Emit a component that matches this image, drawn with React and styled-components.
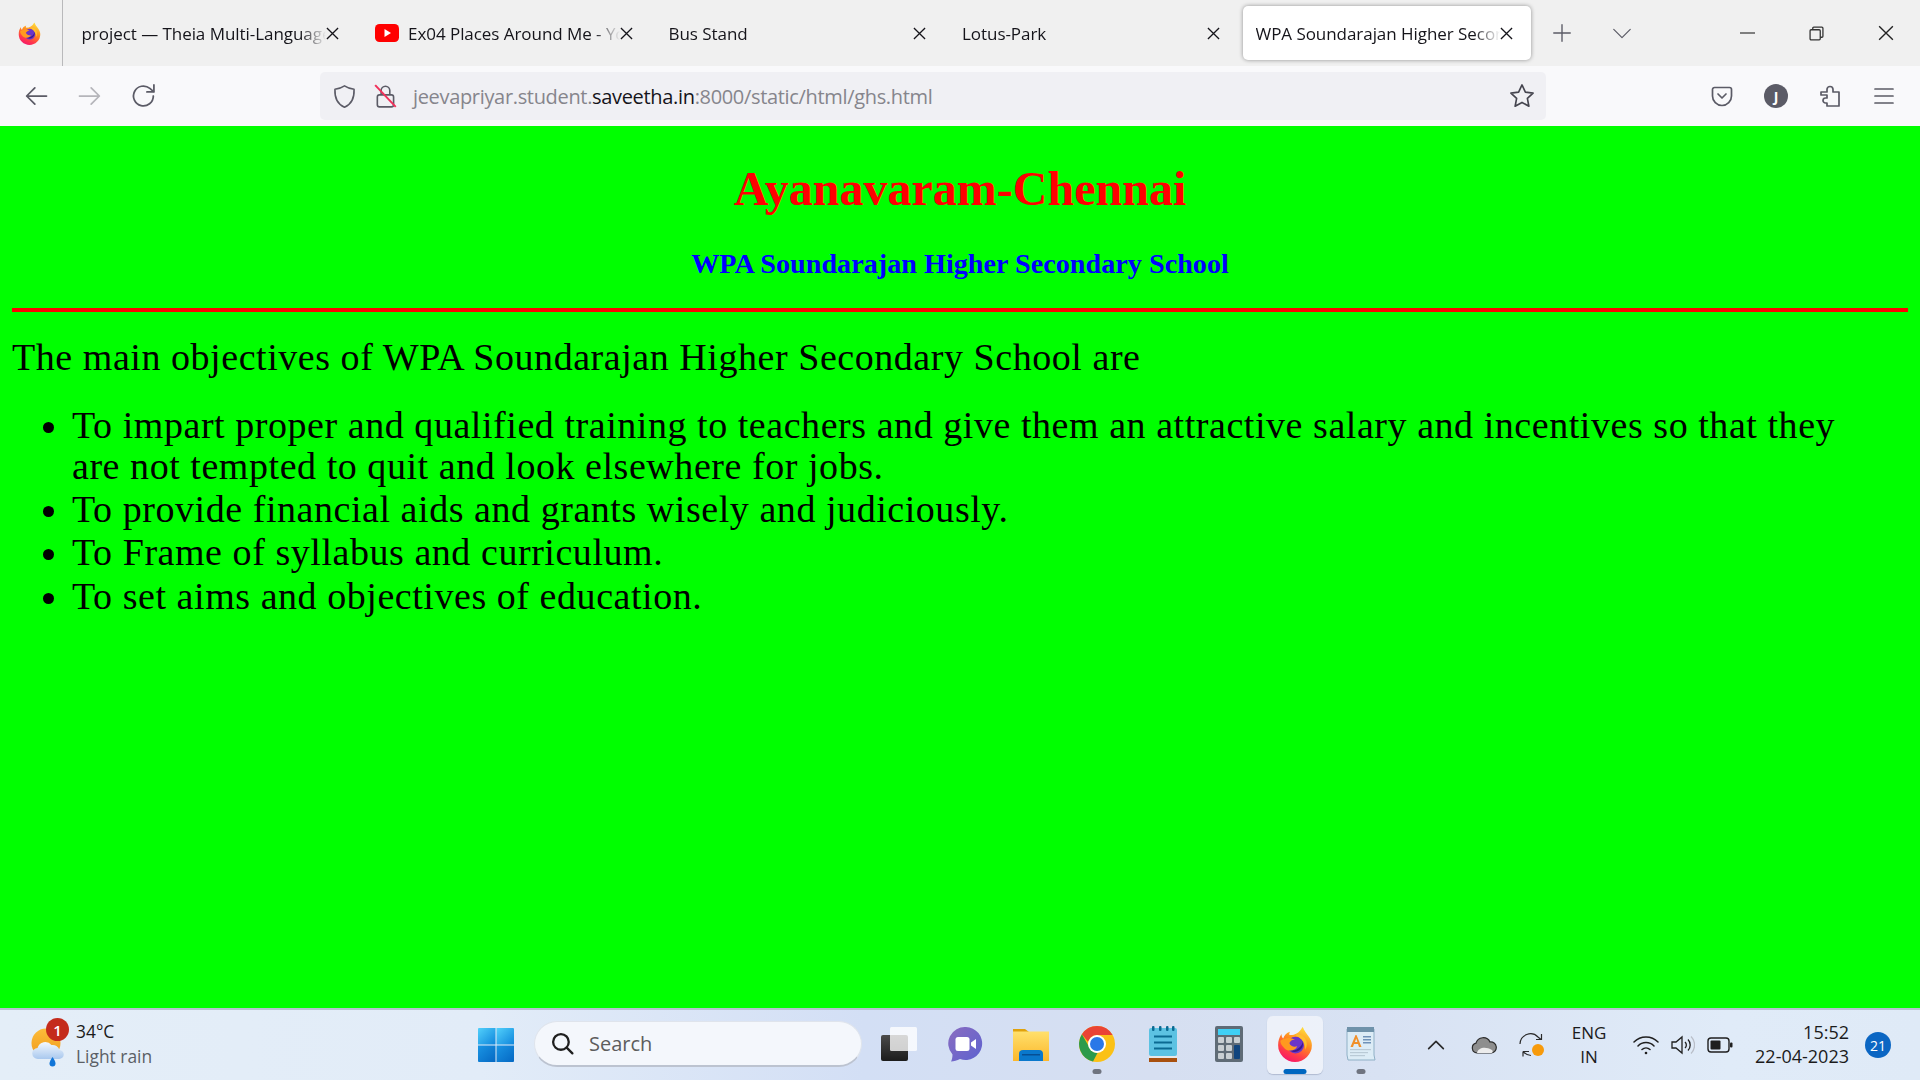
import React from "react";
import styled, { createGlobalStyle } from "styled-components";

const GlobalStyle = createGlobalStyle`
  html, body { margin: 0; padding: 0; overflow: hidden; }
  body { font-family: "Open Sans", "Noto Sans", sans-serif; background: #00ff00; }
`;

const Shell = styled.div`
  width: 1920px;
  height: 1080px;
  display: flex;
  flex-direction: column;
  overflow: hidden;
`;

/* ---------- tab strip ---------- */
const TabStrip = styled.div`
  height: 66px;
  flex: none;
  display: flex;
  align-items: center;
  background: #f0f0f0;
`;
const AppMenu = styled.div`
  width: 63px;
  height: 66px;
  flex: none;
  display: flex;
  align-items: center;
  padding-left: 18px;
  box-sizing: border-box;
  border-right: 1px solid #b9b9bb;
`;
const TabList = styled.div`
  display: flex;
  gap: 5.5px;
  margin-left: 6px;
`;
const Tab = styled.div`
  width: 288px;
  height: 54px;
  box-sizing: border-box;
  display: flex;
  align-items: center;
  padding: 0 18px 0 12.5px;
  border-radius: 5px;
  background: ${p => (p.$active ? "#fff" : "transparent")};
  box-shadow: ${p => (p.$active ? "0 0 4px rgba(0,0,0,.4)" : "none")};
`;
const TabTitle = styled.span`
  flex: 1;
  min-width: 0;
  overflow: hidden;
  white-space: nowrap;
  font-size: 17px;
  letter-spacing: -0.05px;
  color: #15141a;
  margin-left: ${p => (p.$icon ? "9px" : "0")};
  -webkit-mask-image: linear-gradient(to left, transparent 0, #000 26px);
  mask-image: linear-gradient(to left, transparent 0, #000 26px);
`;
const StripActions = styled.div`
  flex: 1;
  display: flex;
  align-items: center;
  padding-left: 20px;
`;
const StripButton = styled.div`
  width: ${p => p.$w}px;
  display: flex;
  justify-content: flex-start;
  align-items: center;
`;
const WindowButtons = styled.div`
  margin-left: auto;
  display: flex;
  align-items: center;
  gap: 54px;
  padding-right: 26px;
`;

/* ---------- toolbar ---------- */
const Toolbar = styled.div`
  height: 60px;
  flex: none;
  display: flex;
  align-items: center;
  background: #f9f9fb;
  padding-left: 22px;
  box-sizing: border-box;
`;
const NavGroup = styled.div`
  width: 298px;
  display: flex;
  align-items: center;
  gap: 26px;
`;
const UrlBar = styled.div`
  width: 1226px;
  height: 48px;
  display: flex;
  align-items: center;
  box-sizing: border-box;
  padding: 0 10px 0 11px;
  border-radius: 5px;
  background: #f0f0f4;
`;
const LockSlot = styled.div`
  display: flex;
  margin-left: 15px;
`;
const UrlText = styled.div`
  flex: 1;
  margin-left: 14px;
  font-size: 20px;
  letter-spacing: -0.33px;
  color: #86858c;
  white-space: nowrap;
`;
const UrlHost = styled.span`
  color: #15141a;
`;
const ToolGroup = styled.div`
  margin-left: auto;
  display: flex;
  align-items: center;
  gap: 30px;
  padding-right: 24px;
`;
const Avatar = styled.div`
  width: 24px;
  height: 24px;
  border-radius: 50%;
  background: #5b5b66;
  color: #fff;
  font-size: 14px;
  font-weight: 700;
  display: flex;
  align-items: center;
  justify-content: center;
`;

/* ---------- page ---------- */
const Page = styled.main`
  flex: 1;
  min-height: 0;
  background: #00ff00;
  padding: 0 12px;
  font-family: "Liberation Serif", serif;
  color: #000;
`;
const Title = styled.h1`
  margin: 0;
  padding-top: 33px;
  font-size: 48px;
  line-height: 60px;
  font-weight: 700;
  text-align: center;
  color: #ff0000;
`;
const SubTitle = styled.h2`
  margin: 0;
  padding-top: 28px;
  font-size: 28.2px;
  line-height: 34px;
  font-weight: 700;
  text-align: center;
  color: #0000ff;
`;
const Rule = styled.hr`
  margin: 27px 0 0;
  height: 4px;
  border: 0;
  background: #ff0000;
`;
const Intro = styled.p`
  margin: 21px 0 0;
  font-size: 38px;
  line-height: 48px;
  letter-spacing: 0.55px;
`;
const Objectives = styled.ul`
  margin: 23.5px 0 0;
  padding: 0 40px 0 60px;
  font-size: 38px;
  line-height: 41px;
  letter-spacing: 0.55px;
`;
const Objective = styled.li`
  margin-bottom: 2.4px;
`;

/* ---------- taskbar ---------- */
const Taskbar = styled.footer`
  height: 72px;
  flex: none;
  box-sizing: border-box;
  border-top: 2px solid #b8c2cf;
  display: flex;
  align-items: center;
  background: linear-gradient(90deg, #e4eef8 0%, #e2ecf8 25%, #d3dff5 45%, #d6dff1 60%, #d8e2f3 72%, #e0ebf8 90%, #dfeaf7 100%);
`;
const Weather = styled.div`
  width: 478px;
  flex: none;
  box-sizing: border-box;
  padding-left: 30px;
  display: flex;
  align-items: center;
  gap: 8px;
`;
const WeatherIcon = styled.div`
  position: relative;
  width: 38px;
  height: 46px;
`;
const AlertBadge = styled.span`
  position: absolute;
  top: -4px;
  left: 16px;
  width: 23px;
  height: 23px;
  border-radius: 50%;
  background: #c42b1c;
  color: #fff;
  font-size: 15px;
  font-weight: 600;
  display: flex;
  align-items: center;
  justify-content: center;
`;
const WeatherText = styled.div`
  font-size: 17.4px;
  line-height: 25px;
  color: #1b1b1b;
  padding-bottom: 2px;
`;
const WeatherSub = styled.div`
  color: #5b5f66;
`;
const StartButton = styled.div`
  width: 56px;
  flex: none;
  display: flex;
`;
const SearchBox = styled.div`
  width: 328px;
  height: 46px;
  margin-bottom: 2px;
  flex: none;
  box-sizing: border-box;
  display: flex;
  align-items: center;
  gap: 14px;
  padding-left: 15px;
  border-radius: 23px;
  background: #f4f7fc;
  border: 1px solid #dfe4ec;
  border-bottom: 2px solid #bcc3d0;
  font-size: 20px;
  color: #5d5d5d;
`;
const Pinned = styled.div`
  display: flex;
  margin-left: 4px;
`;
const PinnedItem = styled.div`
  position: relative;
  width: 66px;
  height: 58px;
  display: flex;
  align-items: center;
  justify-content: center;
  &::before {
    content: "";
    position: absolute;
    left: 5px;
    right: 5px;
    top: 0;
    bottom: 0;
    border-radius: 6px;
    background: ${p => (p.$active ? "rgba(255,255,255,.55)" : "transparent")};
    box-shadow: ${p => (p.$active ? "0 1px 1px rgba(120,130,160,.4)" : "none")};
  }
  & > svg { position: relative; top: -1px; }
  &::after {
    content: "";
    display: ${p => (p.$running || p.$active ? "block" : "none")};
    position: absolute;
    bottom: 0;
    left: 50%;
    transform: translateX(-50%);
    width: ${p => (p.$active ? "23px" : "9px")};
    height: 5px;
    border-radius: 3px;
    background: ${p => (p.$active ? "#0067c0" : "#6f7480")};
  }
`;
const Tray = styled.div`
  margin-left: auto;
  display: flex;
  align-items: center;
`;
const TraySlot = styled.div`
  width: ${p => p.$w}px;
  flex: none;
  display: flex;
  justify-content: center;
  align-items: center;
`;
const LangText = styled.div`
  font-size: 17px;
  line-height: 24px;
  text-align: center;
  color: #1b1b1b;
`;
const Clock = styled.div`
  width: 105px;
  flex: none;
  text-align: right;
  font-size: 18px;
  line-height: 24px;
  color: #1b1b1b;
  padding-bottom: 3px;
`;
const CountBadge = styled.div`
  width: 26px;
  height: 26px;
  margin: 0 29px 0 16px;
  flex: none;
  border-radius: 50%;
  background: #0b66c3;
  color: #fff;
  font-size: 14px;
  display: flex;
  align-items: center;
  justify-content: center;
`;

/* ---------- icons ---------- */
const Stroke = ({ size = 24, color = "#5b5b66", width = 2, children }) => (
  <svg width={size} height={size} viewBox="0 0 24 24" fill="none" stroke={color} strokeWidth={width} strokeLinecap="round" strokeLinejoin="round">
    {children}
  </svg>
);
const CloseIcon = ({ size = 13, color = "#15141a", width = 1.4 }) => (
  <svg width={size} height={size} viewBox="0 0 14 14" fill="none" stroke={color} strokeWidth={width}>
    <path d="M1 1l12 12M13 1L1 13" />
  </svg>
);
const Firefox = ({ id, size = 28 }) => (
  <svg width={size} height={size} viewBox="0 0 32 32">
    <defs>
      <linearGradient id={id} x1="0.75" y1="0.05" x2="0.3" y2="1">
        <stop offset="0" stopColor="#ffd93b" />
        <stop offset="0.4" stopColor="#ff8a1f" />
        <stop offset="0.75" stopColor="#ff3a4a" />
        <stop offset="1" stopColor="#f5156c" />
      </linearGradient>
    </defs>
    <path fill={`url(#${id})`} d="M23 1c1 3 3 5 5 8 2 3 3 5 3 8a15 15 0 0 1-30 0c0-4 1-7 3-10 0 2 .6 3 1.500 4 1-3 3-5 6-6-1 2-.8 3 .5 3 4 0 8-2 10.500-7z" />
    <circle cx="16.500" cy="17" r="7.500" fill="#6b35c9" />
    <path fill="#3d1a8c" d="M12 22a7.500 7.500 0 0 0 11-8c-1 5-6 8-11 8z" />
    <path fill="#ff9a1f" d="M3 13c4-3 9-3 13-1-2 0-4 1-5 3 1 3 4 4 7 3-2 5-9 5-12 1-2-2-3-4-3-6z" />
    <path fill="#ffc02e" d="M16 8c3-1 7 0 9 3 2 3 2 7 0 10 .5-5-2-10-9-13z" />
  </svg>
);
const YouTube = () => (
  <svg width="24" height="18" viewBox="0 0 24 18">
    <rect width="24" height="18" rx="4.500" fill="#f00" />
    <path d="M9.500 5v8l6.500-4z" fill="#fff" />
  </svg>
);
const WindowsLogo = () => (
  <svg width="36" height="36" viewBox="0 0 36 36">
    <defs>
      <linearGradient id="winA" x1="0" y1="0" x2="1" y2="1">
        <stop offset="0" stopColor="#52d0fb" />
        <stop offset="1" stopColor="#0f86dc" />
      </linearGradient>
      <linearGradient id="winB" x1="0" y1="0" x2="1" y2="1">
        <stop offset="0" stopColor="#1a95e4" />
        <stop offset="1" stopColor="#0568c3" />
      </linearGradient>
    </defs>
    <path fill="url(#winA)" d="M1 1h16.500v16.500H0V2a1 1 0 0 1 1-1z" />
    <path fill="url(#winA)" d="M18.500 1H35a1 1 0 0 1 1 1v15.500H18.500z" />
    <path fill="url(#winB)" d="M0 18.500h17.500V35H1a1 1 0 0 1-1-1z" />
    <path fill="url(#winB)" d="M18.500 18.500H36V34a1 1 0 0 1-1 1H18.500z" />
  </svg>
);
const TaskView = () => (
  <svg width="36" height="36" viewBox="0 0 36 36">
    <defs>
      <linearGradient id="tvA" x1="0" y1="0" x2="0" y2="1">
        <stop offset="0" stopColor="#4a4a4a" />
        <stop offset="1" stopColor="#1c1c1c" />
      </linearGradient>
    </defs>
    <rect x="0" y="9" width="27" height="26" rx="2" fill="url(#tvA)" />
    <rect x="9" y="1" width="27" height="24" rx="1.500" fill="#fff" opacity=".78" />
  </svg>
);
const Chat = () => (
  <svg width="36" height="36" viewBox="0 0 36 36">
    <defs>
      <linearGradient id="chatA" x1="0" y1="0" x2="1" y2="1">
        <stop offset="0" stopColor="#8a6cc0" />
        <stop offset="1" stopColor="#5d62d0" />
      </linearGradient>
    </defs>
    <path fill="url(#chatA)" d="M19 1a16.500 16.500 0 1 1-6 32c-3 1.500-6 2.500-9 2.500 1-2 1.500-4.500 1.500-7A16.500 16.500 0 0 1 19 1z" />
    <rect x="8.500" y="11" width="14" height="14" rx="2.500" fill="#fff" />
    <path fill="#fff" d="M24 16.500l5-3.500v10l-5-3.500z" />
  </svg>
);
const Folder = () => (
  <svg width="36" height="36" viewBox="0 0 36 36">
    <defs>
      <linearGradient id="fldA" x1="0" y1="0" x2="0" y2="1">
        <stop offset="0" stopColor="#ffe06c" />
        <stop offset="1" stopColor="#fcb72b" />
      </linearGradient>
    </defs>
    <path fill="#e0a20c" d="M0 3h12l4 3h20v8H0z" />
    <rect x="0" y="5.500" width="36" height="29.500" fill="url(#fldA)" />
    <path fill="#0a78cc" d="M6 35v-7a4 4 0 0 1 4-4h16a4 4 0 0 1 4 4v7z" />
    <rect x="9" y="28" width="18" height="1.500" fill="#064f94" />
  </svg>
);
const Chrome = () => (
  <svg width="36" height="36" viewBox="0 0 36 36">
    <circle cx="18" cy="18" r="18" fill="#fbc116" />
    <path fill="#ea4335" d="M18 0a18 18 0 0 1 15.600 9H18a9 9 0 0 0-8.800 7L2.900 8.300A18 18 0 0 1 18 0z" />
    <path fill="#2c9a4b" d="M2.900 8.300L11 22.500a9 9 0 0 0 7.500 4.500L14 35.600A18 18 0 0 1 2.900 8.300z" />
    <circle cx="18" cy="18" r="9" fill="#fff" />
    <circle cx="18" cy="18" r="7" fill="#2a78e8" />
  </svg>
);
const Notepad = () => (
  <svg width="28" height="36" viewBox="0 0 28 36">
    <rect x="0" y="2" width="28" height="28" rx="2" fill="#5cc2e2" />
    <rect x="0" y="30" width="28" height="2" fill="#e8e8e8" />
    <rect x="0" y="32" width="28" height="4" fill="#a8500e" />
    <g fill="#0b6a92">
      <rect x="3" y="0" width="2.500" height="5" rx="1" />
      <rect x="10" y="0" width="2.500" height="5" rx="1" />
      <rect x="17" y="0" width="2.500" height="5" rx="1" />
      <rect x="23" y="0" width="2.500" height="5" rx="1" />
      <rect x="5" y="9.500" width="18" height="2" />
      <rect x="5" y="15.500" width="18" height="2" />
      <rect x="5" y="21.500" width="18" height="2" />
    </g>
  </svg>
);
const Calculator = () => (
  <svg width="28" height="36" viewBox="0 0 28 36">
    <rect width="28" height="36" rx="2" fill="#5f6b76" />
    <rect x="3" y="3" width="22" height="6" fill="#3fd0f5" />
    <g fill="#c8ced2">
      <rect x="3" y="11" width="6" height="6" rx="1" />
      <rect x="11" y="11" width="6" height="6" rx="1" />
      <rect x="19" y="11" width="6" height="6" rx="1" />
      <rect x="3" y="19" width="6" height="6" rx="1" />
      <rect x="11" y="19" width="6" height="6" rx="1" />
      <rect x="3" y="27" width="6" height="6" rx="1" />
      <rect x="11" y="27" width="6" height="6" rx="1" />
    </g>
    <rect x="19" y="19" width="6" height="14" rx="1" fill="#11457e" />
  </svg>
);
const WordPad = () => (
  <svg width="30" height="36" viewBox="0 0 30 36">
    <path fill="#dcecf6" stroke="#8fb0c6" d="M1 3h27v26l1 5H2l-1-5z" />
    <rect x="1" y="1" width="27" height="5" fill="#6f92aa" />
    <path d="M9.500 9l-5 12h2.500l1-3h4l1 3h2.500l-5-12zM9 16l1.200-3.500 1.200 3.500z" fill="#f0902a" fillRule="evenodd" />
    <g fill="#6f92b8">
      <rect x="17" y="10" width="8" height="1.500" />
      <rect x="17" y="13" width="8" height="1.500" />
      <rect x="17" y="16" width="8" height="1.500" />
    </g>
    <g fill="#b9cad6">
      <rect x="4" y="23" width="21" height="1.200" />
      <rect x="4" y="26" width="18" height="1.200" />
      <rect x="4" y="29" width="15" height="1.200" />
    </g>
  </svg>
);
const WeatherGlyph = () => (
  <svg width="38" height="46" viewBox="0 0 38 46">
    <defs>
      <linearGradient id="sunA" x1="0" y1="0" x2="0" y2="1">
        <stop offset="0" stopColor="#fcbc3a" />
        <stop offset="1" stopColor="#f09a1c" />
      </linearGradient>
      <linearGradient id="cloudA" x1="0" y1="0" x2="0" y2="1">
        <stop offset="0" stopColor="#f3f8fe" />
        <stop offset="1" stopColor="#a9c8ee" />
      </linearGradient>
    </defs>
    <circle cx="16" cy="21" r="14.500" fill="url(#sunA)" />
    <path fill="url(#cloudA)" d="M8 37a5.500 5.500 0 0 1-.5-11 8 8 0 0 1 14-3 7 7 0 0 1 8 5 4.500 4.500 0 0 1-.5 9z" />
    <path fill="#1175d8" d="M22.500 35c2 3 3 5 3 6.500a3 3 0 0 1-6 0c0-1.500 1-3.500 3-6.500z" />
  </svg>
);

const tabs = [
  { title: "project — Theia Multi-Language" },
  { title: "Ex04 Places Around Me - YouTube", icon: true },
  { title: "Bus Stand" },
  { title: "Lotus-Park" },
  { title: "WPA Soundarajan Higher Secondary School", active: true },
];

const objectives = [
  "To impart proper and qualified training to teachers and give them an attractive salary and incentives so that they are not tempted to quit and look elsewhere for jobs.",
  "To provide financial aids and grants wisely and judiciously.",
  "To Frame of syllabus and curriculum.",
  "To set aims and objectives of education.",
];

export default function App() {
  return (
    <Shell>
      <GlobalStyle />
      <TabStrip>
        <AppMenu>
          <Firefox id="ffMenu" size={23} />
        </AppMenu>
        <TabList>
          {tabs.map(t => (
            <Tab key={t.title} $active={t.active}>
              {t.icon && <YouTube />}
              <TabTitle $icon={t.icon}>{t.title}</TabTitle>
              <CloseIcon />
            </Tab>
          ))}
        </TabList>
        <StripActions>
          <StripButton $w={60}>
            <Stroke size={22} width={1.500}>
              <path d="M12 3v18M3 12h18" />
            </Stroke>
          </StripButton>
          <StripButton $w={40}>
            <Stroke size={22} width={1.300}>
              <path d="M3 8l9 9 9-9" />
            </Stroke>
          </StripButton>
          <WindowButtons>
            <svg width="15" height="2" viewBox="0 0 15 2"><path d="M0 1h15" stroke="#333" strokeWidth="1.200" /></svg>
            <svg width="15" height="15" viewBox="0 0 14 14" fill="none" stroke="#333" strokeWidth="1.200">
              <rect x="1" y="3.500" width="9.500" height="9.500" rx="1" />
              <path d="M3.500 3.500V2a1 1 0 0 1 1-1H12a1 1 0 0 1 1 1v7.500a1 1 0 0 1-1 1h-1.500" />
            </svg>
            <CloseIcon size={16} color="#222" width={1.200} />
          </WindowButtons>
        </StripActions>
      </TabStrip>

      <Toolbar>
        <NavGroup>
          <Stroke size={28} width={1.500}>
            <path d="M21 12H4M11 5l-7 7 7 7" />
          </Stroke>
          <Stroke size={28} width={1.500} color="#b5b5ba">
            <path d="M3 12h17M13 5l7 7-7 7" />
          </Stroke>
          <Stroke size={28} width={1.500}>
            <path d="M20 12a8.500 8.500 0 1 1-3-6.500L20 8" />
            <path d="M20.500 2.500V8.500H14.500" />
          </Stroke>
        </NavGroup>
        <UrlBar>
          <Stroke size={27} width={1.400}>
            <path d="M12 2.500c3 2 6 2.800 8.500 3 .3 7-1.500 13-8.500 16-7-3-8.800-9-8.500-16 2.500-.2 5.500-1 8.500-3z" />
          </Stroke>
          <LockSlot>
            <svg width="26" height="26" viewBox="0 0 24 24" fill="none" strokeWidth="1.500">
              <rect x="4" y="11" width="15" height="11" rx="2" stroke="#5b5b66" />
              <path d="M7.500 11V7a4 4 0 0 1 8 0v4" stroke="#5b5b66" />
              <path d="M2 2l19 20" stroke="#f0305a" strokeWidth="1.800" />
            </svg>
          </LockSlot>
          <UrlText>
            jeevapriyar.student.<UrlHost>saveetha.in</UrlHost>:8000/static/html/ghs.html
          </UrlText>
          <Stroke size={28} width={1.400} color="#45454f">
            <path d="M12 2.500l2.900 6.200 6.600.8-4.900 4.600 1.300 6.700L12 17.500l-5.900 3.300 1.300-6.700-4.900-4.600 6.600-.8z" />
          </Stroke>
        </UrlBar>
        <ToolGroup>
          <Stroke size={24} width={1.700}>
            <path d="M4.500 3.500h15a2 2 0 0 1 2 2V12a9.500 9.500 0 0 1-19 0V5.500a2 2 0 0 1 2-2z" />
            <path d="M8 10l4 4 4-4" />
          </Stroke>
          <Avatar>J</Avatar>
          <Stroke size={24} width={1.700}>
            <path d="M3 8h6V5.500a3 3 0 0 1 6 0V8h6v14H9v-3h-1.500a2.500 2.500 0 0 1 0-5H9v-3H3z" />
          </Stroke>
          <Stroke size={24} width={1.700}>
            <path d="M3 5h18M3 12h18M3 19h18" />
          </Stroke>
        </ToolGroup>
      </Toolbar>

      <Page>
        <Title>Ayanavaram-Chennai</Title>
        <SubTitle>WPA Soundarajan Higher Secondary School</SubTitle>
        <Rule />
        <Intro>The main objectives of WPA Soundarajan Higher Secondary School are</Intro>
        <Objectives>
          {objectives.map(o => (
            <Objective key={o}>{o}</Objective>
          ))}
        </Objectives>
      </Page>

      <Taskbar>
        <Weather>
          <WeatherIcon>
            <WeatherGlyph />
            <AlertBadge>1</AlertBadge>
          </WeatherIcon>
          <WeatherText>
            34°C
            <WeatherSub>Light rain</WeatherSub>
          </WeatherText>
        </Weather>
        <StartButton>
          <WindowsLogo />
        </StartButton>
        <SearchBox>
          <Stroke size={25} width={2.200} color="#1f1f1f">
            <circle cx="10.500" cy="10.500" r="7.500" />
            <path d="M16 16l5.500 5.500" />
          </Stroke>
          Search
        </SearchBox>
        <Pinned>
          <PinnedItem><TaskView /></PinnedItem>
          <PinnedItem><Chat /></PinnedItem>
          <PinnedItem><Folder /></PinnedItem>
          <PinnedItem $running><Chrome /></PinnedItem>
          <PinnedItem><Notepad /></PinnedItem>
          <PinnedItem><Calculator /></PinnedItem>
          <PinnedItem $active><Firefox id="ffTask" size={36} /></PinnedItem>
          <PinnedItem $running><WordPad /></PinnedItem>
        </Pinned>
        <Tray>
          <TraySlot $w={48}>
            <Stroke size={22} width={1.800} color="#2a2a2a"><path d="M4 16l8-8 8 8" /></Stroke>
          </TraySlot>
          <TraySlot $w={48}>
            <svg width="26" height="18" viewBox="0 0 26 18">
              <path d="M6 17a5 5 0 0 1-1-9.800 7.500 7.500 0 0 1 14-1.200 5.500 5.500 0 0 1 1.500 11z" fill="#8e8e8e" stroke="#2b2b2b" strokeWidth="1.200" />
              <path d="M6 17c1-5 8-7 15-3 1 1 1 2.500-.500 3z" fill="#ececec" />
            </svg>
          </TraySlot>
          <TraySlot $w={48}>
            <svg width="26" height="26" viewBox="0 0 26 26" fill="none" stroke="#2a2a2a" strokeWidth="1.200">
              <path d="M1 12a10.500 10.500 0 0 1 18-7l3 2.500M22.500 2v5.500H17" />
              <path d="M4 19.500h6M4 19.500v5M4 19.500c3 3 6 4 8 4" />
              <circle cx="19" cy="18" r="6" fill="#f79a0b" stroke="none" />
            </svg>
          </TraySlot>
          <TraySlot $w={66}>
            <LangText>ENG<br />IN</LangText>
          </TraySlot>
          <TraySlot $w={48}>
            <svg width="26" height="20" viewBox="0 0 26 20" fill="none" stroke="#1f1f1f" strokeWidth="1.500" strokeLinecap="round">
              <path d="M1 7a17 17 0 0 1 24 0M5 11a11 11 0 0 1 16 0M9 14.500a6 6 0 0 1 8 0" />
              <circle cx="13" cy="18" r="1.300" fill="#1f1f1f" stroke="none" />
            </svg>
          </TraySlot>
          <TraySlot $w={26}>
            <svg width="24" height="20" viewBox="0 0 24 20" fill="none" stroke="#1f1f1f" strokeWidth="1.300">
              <path d="M1 7h4l6-5v16l-6-5H1z" />
              <path d="M14 7a4 4 0 0 1 0 6M17 4.500a8 8 0 0 1 0 11" />
              <path d="M20 1.500a12 12 0 0 1 0 17" stroke="#b9bec8" />
            </svg>
          </TraySlot>
          <TraySlot $w={48}>
            <svg width="26" height="16" viewBox="0 0 26 16">
              <rect x="1" y="1" width="21" height="14" rx="3" fill="none" stroke="#1f1f1f" strokeWidth="1.400" />
              <rect x="3.500" y="3.500" width="10" height="9" rx="1" fill="#1f1f1f" />
              <rect x="23" y="5.500" width="2.500" height="5" rx="1" fill="#1f1f1f" />
            </svg>
          </TraySlot>
          <Clock>15:52<br />22-04-2023</Clock>
          <CountBadge>21</CountBadge>
        </Tray>
      </Taskbar>
    </Shell>
  );
}
